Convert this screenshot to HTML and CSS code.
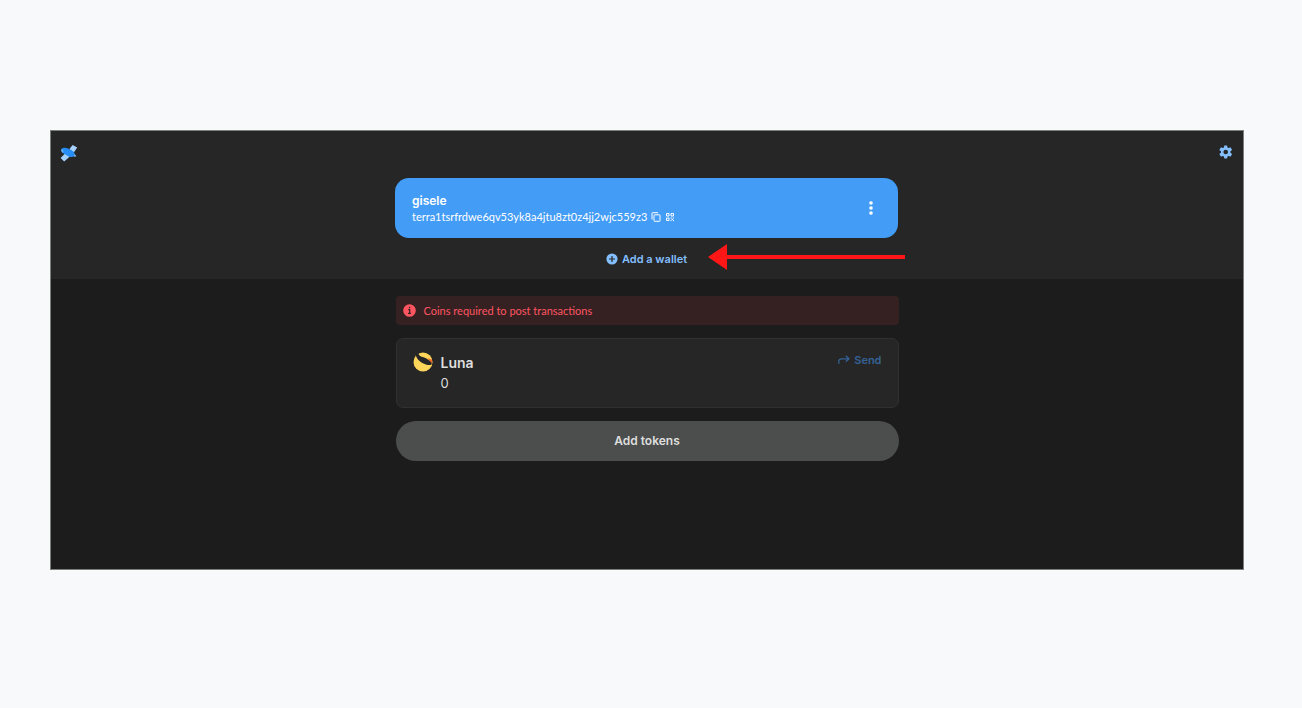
FILE: index.html
```html
<!DOCTYPE html>
<html lang="en">
<head>
<meta charset="utf-8">
<meta name="viewport" content="width=device-width, initial-scale=1">
<title>Wallet</title>
<link rel="stylesheet" href="styles.css">
</head>
<body>
<div class="app">
  <header class="top">
    <a class="logo" href="#" aria-label="Home">
      <svg width="18" height="18" viewBox="0 0 18 18"><path d="M9.500 5 12.600.9 17.200 3.400 13.600 8.800Z" fill="#a6d2ff"/><path d="M5 9.600.6 14 4.200 17.400 9.800 12.600Z" fill="#a6d2ff"/><path d="M1.500 5C3 3.300 6 3.600 8.600 4.800L13.400 7.500C15 9 15 11.200 14.200 12.200 12.200 13.600 9.600 13 7 11.400L2.800 9C1.400 7.800.9 6.200 1.500 5Z" fill="#258df5"/><path d="M1.500 5 3.700 6.500 2.800 9C1.400 7.800.9 6.200 1.500 5Z" fill="#66b2fb"/><path d="m14.500 10 2 2.300-2.500.5Z" fill="#8cc5fd"/></svg>
    </a>
    <div class="column">
      <section class="wallet">
        <div class="identity">
          <h1 class="name">gisele</h1>
          <div class="address">
            <span>terra1tsrfrdwe6qv53yk8a4jtu8zt0z4jj2wjc559z3</span>
            <button class="icon" aria-label="Copy address"><svg width="10" height="10" viewBox="0 0 10 10" fill="none" stroke="currentColor"><path d="M1 7.500V1.200Q1 .7 1.500.7H7"/><rect x="3" y="2.800" width="6" height="6.500" rx=".5"/></svg></button>
            <button class="icon" aria-label="Show QR code"><svg width="10" height="10" viewBox="0 0 10 10" fill="none" stroke="currentColor"><path d="M1.500 1.500H4V4H1.500ZM6 1.500H8.500V4H6ZM1.500 6H4V8.500H1.500Z"/><path d="M5.500 6h1.400M7.800 6H9M6.600 7.400H8M5.500 8.600h1.100M7.900 8.600H9"/></svg></button>
          </div>
        </div>
        <button class="icon more" aria-label="More"><svg width="6" height="16" viewBox="0 0 6 16" fill="#fff"><circle cx="3" cy="3" r="1.800"/><circle cx="3" cy="8" r="1.800"/><circle cx="3" cy="13" r="1.800"/></svg></button>
      </section>
      <div class="add-row">
        <button class="add-wallet"><svg width="12" height="12" viewBox="0 0 12 12"><circle cx="6" cy="6" r="5.600" fill="#83bfff"/><path d="M6 3v6M3 6h6" stroke="#262626" stroke-width="1.200"/></svg>Add a wallet</button>
        <svg class="arrow" width="197" height="26" viewBox="0 0 197 26" aria-hidden="true"><path d="M0 13 19 0V11H197V15H19V26Z" fill="#ff1616"/></svg>
      </div>
    </div>
    <button class="icon settings" aria-label="Settings"><svg width="14" height="14" viewBox="0 0 24 24" fill="#83bfff"><path d="M19.600 13.100c.1-.7.1-1.500 0-2.200l2.400-1.900c.2-.2.3-.5.2-.7l-2.300-4c-.1-.3-.4-.3-.7-.2l-2.800 1.100a9 9 0 0 0-1.900-1.100L14 1.200c0-.3-.2-.5-.5-.5h-4c-.3 0-.5.2-.5.5l-.5 2.900q-1 .4-1.900 1.100L3.800 4.100c-.3-.1-.6 0-.7.2l-2.300 4c-.1.3 0 .6.2.7l2.400 1.900a9 9 0 0 0 0 2.200l-2.400 1.900c-.2.2-.3.5-.2.7l2.300 4c.1.3.4.3.7.2l2.800-1.100q.9.7 1.900 1.100l.5 2.900c0 .3.2.5.5.5h4c.3 0 .5-.2.5-.5l.5-2.900q1-.4 1.900-1.100l2.800 1.100c.3.1.6 0 .7-.2l2.300-4c.1-.3 0-.6-.2-.7ZM11.500 8a4 4 0 1 1 0 8 4 4 0 0 1 0-8Z" fill-rule="evenodd"/></svg></button>
  </header>
  <main class="column content">
    <p class="alert"><svg width="13" height="13" viewBox="0 0 13 13"><circle cx="6.500" cy="6.500" r="6.300" fill="#ff5561"/><path d="M6.600 2.700v1.500M5.300 5.700h1.400v3.600M5 9.400h3" stroke="#352122" stroke-width="1.200" fill="none"/></svg>Coins required to post transactions</p>
    <section class="asset">
      <svg class="coin" width="20" height="20" viewBox="0 0 20 20"><circle cx="10" cy="10" r="9.500" fill="#ffd65a"/><path d="M14.500 6C16 7 18 6.800 18.900 8 19.700 9.500 19.200 11.500 18.500 11.800Z" fill="#f4692b"/><path d="M3.300 1.800 5.400.9C5.600 3.500 8 4.600 10.500 5.300 14 6.500 17.200 8.800 18.500 10.800 19.300 12.600 18 13.400 15.500 13 10.500 12.600 5 9 3.300 4.800 2.900 3.800 2.900 2.600 3.300 1.800Z" fill="#262626"/></svg>
      <div class="holding">
        <h2 class="token">Luna</h2>
        <span class="amount">0</span>
      </div>
      <button class="send"><svg width="12" height="10" viewBox="0 0 12 10" fill="none" stroke="currentColor" stroke-width="1.200"><path d="M.8 9V6.500Q.8 3.800 3.500 3.800H11M7.800.8 11 3.800 7.800 6.800"/></svg>Send</button>
    </section>
    <button class="add-tokens">Add tokens</button>
  </main>
</div>
</body>
</html>
```
FILE: styles.css
```css
* { box-sizing: border-box; }
body {
  margin: 0;
  padding: 130px 58px 130px 50px;
  background: #f7f9fb;
  color: #dedede;
  font-family: Inter, "Open Sans", sans-serif;
  font-size: 11px;
}
h1, h2, p { margin: 0; }
button {
  padding: 0;
  border: 0;
  background: none;
  color: inherit;
  font: inherit;
  cursor: pointer;
}
svg { display: block; flex: none; }
.app {
  padding-bottom: 108px;
  border: 1px solid #7b807c;
  background: #1c1c1c;
}
.top {
  display: grid;
  grid-template-columns: 1fr minmax(0, 503px) 1fr;
  align-items: start;
  padding: 13px 10px 0 9px;
  background: #262626;
}
.settings { justify-self: end; margin-top: 1px; }
.logo { justify-self: start; }
.column { width: 100%; max-width: 503px; }
.wallet {
  display: flex;
  align-items: center;
  justify-content: space-between;
  margin-top: 34px;
  padding: 14px 24px 14px 17px;
  border-radius: 14px;
  background: #439cf5;
  color: #fff;
}
.name { font-size: 12px; line-height: 17px; font-weight: 600; }
.address {
  display: flex;
  align-items: center;
  gap: 4px;
  font-family: Lato, sans-serif;
  line-height: 15px;
}
.icon { display: block; }
.add-row {
  position: relative;
  display: flex;
  justify-content: center;
  padding: 12px 0 11px;
}
.add-wallet {
  display: flex;
  align-items: center;
  gap: 4px;
  line-height: 18px;
  color: #83bfff;
  font-weight: 600;
}
.arrow { position: absolute; top: 6px; right: -7px; }
.content {
  display: flex;
  flex-direction: column;
  gap: 13px;
  margin: 17px auto 0;
}
.alert {
  display: flex;
  align-items: center;
  gap: 8px;
  padding: 0 7px;
  border-radius: 4px;
  background: #352122;
  color: #ff5561;
  font-family: Lato, sans-serif;
  line-height: 29px;
}
.asset {
  display: flex;
  align-items: flex-start;
  gap: 8px;
  padding: 13px 16px 14px;
  border: 1px solid #303030;
  border-radius: 7px;
  background: #262626;
}
.holding { flex: 1; }
.token { font-size: 14px; line-height: 22px; font-weight: 600; }
.amount { display: block; font-size: 13px; line-height: 19px; }
.send {
  display: flex;
  align-items: center;
  gap: 4px;
  line-height: 16px;
  color: #346296;
  font-weight: 600;
}
.add-tokens {
  border-radius: 20px;
  background: #4c4e4d;
  font-size: 12px;
  line-height: 40px;
  font-weight: 600;
}
```
